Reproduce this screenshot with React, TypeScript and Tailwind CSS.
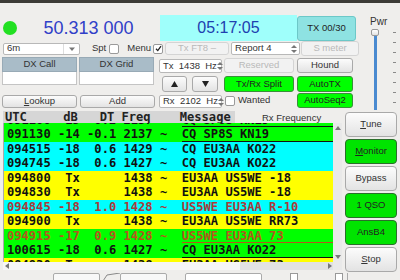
import React from 'react'

type Row = { t: string; bg: string; fg: string; line?: boolean }

// decoded lines, 24 chars of prefix before the message column
const rows: Row[] = [
  { t: '091100 -15 -0.2 2137 ~  CQ SP8S KN19', bg: 'bg-[#00ff00]', fg: 'text-[#111]', line: true },
  { t: '091130 -14 -0.1 2137 ~  CQ SP8S KN19', bg: 'bg-[#00ff00]', fg: 'text-[#111]', line: true },
  { t: '094515 -18  0.6 1429 ~  CQ EU3AA KO22', bg: 'bg-[#00ffff]', fg: 'text-[#111]' },
  { t: '094745 -18  0.6 1427 ~  CQ EU3AA KO22', bg: 'bg-[#00ffff]', fg: 'text-[#111]' },
  { t: '094800  Tx      1438 ~  EU3AA US5WE -18', bg: 'bg-[#ffff00]', fg: 'text-[#111]' },
  { t: '094830  Tx      1438 ~  EU3AA US5WE -18', bg: 'bg-[#ffff00]', fg: 'text-[#111]' },
  { t: '094845 -18  1.0 1428 ~  US5WE EU3AA R-10', bg: 'bg-[#00ffff]', fg: 'text-[#a83a3a]' },
  { t: '094900  Tx      1438 ~  EU3AA US5WE RR73', bg: 'bg-[#ffff00]', fg: 'text-[#111]' },
  { t: '094915 -17  0.9 1428 ~  US5WE EU3AA 73', bg: 'bg-[#00ff00]', fg: 'text-[#b5561c]', line: true },
  { t: '100615 -18  0.6 1427 ~  CQ EU3AA KO22', bg: 'bg-[#00ff00]', fg: 'text-[#111]', line: true },
  { t: '094930  Tx      1438 ~  EU3AA US5WE 73', bg: 'bg-[#ffff00]', fg: 'text-[#111]' },
]

const btn = 'flex items-center justify-center rounded-[3px] border border-[#a9a9a9] bg-linear-to-b from-[#fcfcfc] to-[#e3e3e3] text-[#333]'
const off = 'flex items-center justify-center rounded-[3px] border border-[#d4d4d4] bg-[#f2f2f2] text-[#b9b9b9]'
const green = 'flex items-center justify-center rounded-[3px] border border-[#3a8f3a] bg-[#00ff00] text-[#222]'
const green2 = 'flex items-center justify-center rounded-[4px] border border-[#2b6e2b] bg-[#00e400] text-[#222]'

const SpinArrows = () => (
  <svg width="6" height="10" viewBox="0 0 6 10" className="shrink-0 text-[#777]">
    <polygon points="0,4 3,1 6,4" fill="currentColor" />
    <polygon points="0,6 3,9 6,6" fill="currentColor" />
  </svg>
)

const Spin = ({ children, className }: { children: React.ReactNode; className: string }) => (
  <div className={`flex items-center rounded-[2px] border border-[#b8b8b8] bg-white pl-[3px] pr-[2px] ${className}`}>
    <span className="flex-1 whitespace-pre">{children}</span>
    <SpinArrows />
  </div>
)

const Check = ({ on }: { on?: boolean }) => (
  <div className="flex h-[10px] w-[10px] items-center justify-center rounded-[2px] border border-[#9a9a9a] bg-white">
    {on && (
      <svg width="7" height="7" viewBox="0 0 7 7">
        <path d="M1 3.8 L2.8 5.6 L6 1.2" stroke="#222" strokeWidth="1.3" fill="none" />
      </svg>
    )}
  </div>
)

const Arrow = ({ pts }: { pts: string }) => (
  <svg width="6" height="6" viewBox="0 0 6 6" className="text-[#777]">
    <polygon points={pts} fill="currentColor" />
  </svg>
)

export default function App() {
  return (
    <div className="h-[280px] w-[400px] overflow-hidden bg-[#efeeec] font-['Liberation_Sans',sans-serif] text-[9.5px] text-[#333]">
      <div className="h-[3px] bg-[#3c3b37]" />

      {/* upper controls */}
      <div className="flex h-[108px]">
        <div className="w-[360px]">
          <div className="mt-[12px] flex h-[26px] items-center">
            <div className="ml-[3px] h-[14px] w-[14px] rounded-full bg-[#22e022]" />
            <div className="w-[143px] text-center text-[18px] leading-none text-[#3040c8]">50.313 000</div>
            <div className="flex h-[26px] w-[137px] items-center justify-center bg-[#9ffffb] text-[16px] leading-none text-[#2040b0]">
              05:17:05
            </div>
            <div className="flex h-[25px] w-[59px] items-center justify-center rounded-[3px] border border-[#6cc8c8] bg-[#8ee2e2] text-[9.5px] text-[#222]">
              TX 00/30
            </div>
          </div>

          <div className="flex h-[15px] items-center">
            <div className="ml-[3px] flex h-[12px] w-[77px] items-center rounded-[2px] border border-[#b8b8b8] bg-white">
              <span className="flex-1 pl-[3px]">6m</span>
              <div className="flex h-full w-[16px] items-center justify-center border-l border-[#ddd]">
                <Arrow pts="0,1.5 6,1.5 3,5" />
              </div>
            </div>
            <span className="ml-[12px]">Spt</span>
            <div className="ml-[3px]"><Check /></div>
            <span className="ml-[8px]">Menu</span>
            <div className="ml-[2px]"><Check on /></div>
            <div className={`${off} ml-[2px] h-[13px] w-[64px]`}>Tx FT8 –</div>
            <Spin className="ml-[2px] h-[13px] w-[69px]">Report 4</Spin>
            <div className={`${off} ml-[1px] h-[15px] w-[58px]`}>S meter</div>
          </div>

          <div className="flex">
            {/* DX call / grid */}
            <div className="w-[159px] pl-[2px]">
              <div className="mt-[1px] flex gap-[2px]">
                <div className="w-[75px]">
                  <div className="flex h-[15px] items-center justify-center border border-[#98aab6] bg-[#a9bcc8]">DX Call</div>
                  <div className="h-[13px] border border-t-0 border-[#c4c4c4] bg-white" />
                </div>
                <div className="w-[75px]">
                  <div className="flex h-[15px] items-center justify-center border border-[#98aab6] bg-[#a9bcc8]">DX Grid</div>
                  <div className="h-[13px] border border-t-0 border-[#c4c4c4] bg-white" />
                </div>
              </div>
              <div className="mt-[10px] flex gap-[3px]">
                <div className={`${btn} h-[13px] w-[75px]`}><span className="underline">L</span>ookup</div>
                <div className={`${btn} h-[13px] w-[75px]`}>Add</div>
              </div>
            </div>

            {/* tx / rx freq */}
            <div className="w-[65px]">
              <Spin className="mt-[3px] h-[14px] w-[63px]">Tx  1438  Hz</Spin>
              <div className="mt-[3px] flex h-[16px]">
                <div className={`${btn} ml-[3px] w-[25px]`}>
                  <svg width="7" height="6" viewBox="0 0 7 6"><polygon points="0,6 3.5,0 7,6" fill="#222" /></svg>
                </div>
                <div className={`${btn} ml-[5px] w-[26px]`}>
                  <svg width="7" height="6" viewBox="0 0 7 6"><polygon points="0,0 3.5,6 7,0" fill="#222" /></svg>
                </div>
              </div>
              <Spin className="mt-[3px] h-[13px] w-[63px]">Rx  2102  Hz</Spin>
            </div>

            {/* mode buttons */}
            <div className="w-[129px]">
              <div className="mt-[2px] flex h-[15px] gap-[3px]">
                <div className={`${off} w-[70px]`}>Reserved</div>
                <div className={`${btn} w-[56px]`}>Hound</div>
              </div>
              <div className="mt-[3px] flex h-[16px] gap-[3px]">
                <div className={`${green} w-[70px]`}>Tx/Rx Split</div>
                <div className={`${green} w-[56px]`}>AutoTX</div>
              </div>
              <div className="mt-[1px] flex h-[15px]">
                <div className="flex w-[73px] items-center gap-[3px] pl-[1px]">
                  <Check />
                  <span>Wanted</span>
                </div>
                <div className={`${green} w-[56px] text-[#2b50c0]`}>AutoSeq2</div>
              </div>
            </div>
          </div>
        </div>

        {/* power slider */}
        <div className="flex-1">
          <div className="ml-[10px] mt-[13px] text-[10px] leading-[12px]">Pwr</div>
          <div className="flex">
            <div className="ml-[11px] mt-[1px] flex w-[8px] flex-col items-center">
              <div className="h-[7px] w-[8px] rounded-[2px] border border-[#999] bg-linear-to-b from-white to-[#e2e2e2]" />
              <div className="h-[74px] w-[3px] bg-[#4a8ad0]" />
            </div>
            <div className="ml-[14px] mt-[4px] flex flex-col gap-[9px]">
              {[0, 1, 2, 3, 4, 5, 6, 7].map((i) => (
                <div key={i} className="h-[1px] w-[3px] bg-[#8a8a8a]" />
              ))}
            </div>
          </div>
        </div>
      </div>

      {/* decode list + right buttons */}
      <div className="flex">
        <div className="ml-[3px] w-[339px]">
          <div className="flex h-[12px] items-end">
            <div className="h-[12px] w-[232px] overflow-hidden whitespace-pre bg-[#d6d6d6] pl-[2px] font-['DejaVu_Sans_Mono',monospace] text-[12.1px] font-bold leading-[12px] text-[#222]">
              {'UTC     dB   DT Freq    Message'}
            </div>
            <div className="ml-[27px] text-[9.5px] leading-[11px]">Rx Frequency</div>
          </div>
          <div className="flex">
            <div className="h-[139px] w-[330px] overflow-hidden border-l border-[#aaa] bg-white">
              <div className="-mt-[10.5px] font-['DejaVu_Sans_Mono',monospace] text-[12.1px] font-bold leading-[14.5px]">
                {rows.map((r, i) => (
                  <div key={i} className={`flex h-[14.5px] whitespace-pre pl-[3px] ${r.bg} ${r.fg}`}>
                    <span>{r.t.slice(0, 24)}</span>
                    <span className={r.line ? 'h-[14.5px] flex-1 border-b' : 'flex-1'}>{r.t.slice(24)}</span>
                  </div>
                ))}
              </div>
            </div>
            <div className="flex h-[139px] w-[9px] flex-col items-center justify-between bg-[#e9e9e9] py-[2px]">
              <Arrow pts="0,5 3,1 6,5" />
              <Arrow pts="0,1 3,5 6,1" />
            </div>
          </div>
          <div className="flex h-[8px]">
            <div className="flex w-[330px] items-center bg-[#e2e2e2]">
              <div className="flex h-full w-[237px] items-center bg-[#f6f6f6] pl-[1px]">
                <Arrow pts="5,0 1,3 5,6" />
              </div>
              <div className="flex-1" />
              <Arrow pts="1,0 5,3 1,6" />
            </div>
            <div className="w-[9px] bg-[#e9e9e9]" />
          </div>
        </div>

        <div className="ml-[3px] mt-[1px] flex w-[52px] flex-col gap-[2px]">
          <div className={`${btn} h-[25px] rounded-[4px]`}><span className="underline">T</span>une</div>
          <div className={`${green2} h-[25px]`}><span className="underline">M</span>onitor</div>
          <div className={`${btn} h-[25px] rounded-[4px]`}>Bypass</div>
          <div className={`${green2} h-[25px]`}>1 QSO</div>
          <div className={`${green2} h-[25px]`}>AnsB4</div>
          <div className={`${btn} h-[25px] rounded-[4px]`}><span className="underline">S</span>top</div>
        </div>
      </div>

      {/* tab strip (cut off) */}
      <div className="mt-[1px] flex h-[10px] items-start">
        <div className="ml-[53px] h-[10px] w-[47px] rounded-t-[2px] border border-[#aaa] bg-[#f8f8f8]" />
        <svg width="17" height="8" viewBox="0 0 17 8" className="ml-[3px]">
          <path d="M0 8 L4 2 L17 0" stroke="#888" fill="none" />
        </svg>
        <div className="h-[10px] w-[47px] rounded-t-[2px] border border-[#aaa] bg-[#f8f8f8]" />
        <div className="ml-[18px] h-[10px] w-[77px] rounded-t-[2px] border border-[#aaa] bg-white" />
        <div className="ml-[28px] h-[10px] w-[8px] border border-[#999] bg-white" />
        <div className="ml-[37px] h-[10px] w-[8px] border border-[#999] bg-white" />
        <div className="ml-[4px] h-[10px] w-[1px] bg-[#aaa]" />
      </div>
    </div>
  )
}
